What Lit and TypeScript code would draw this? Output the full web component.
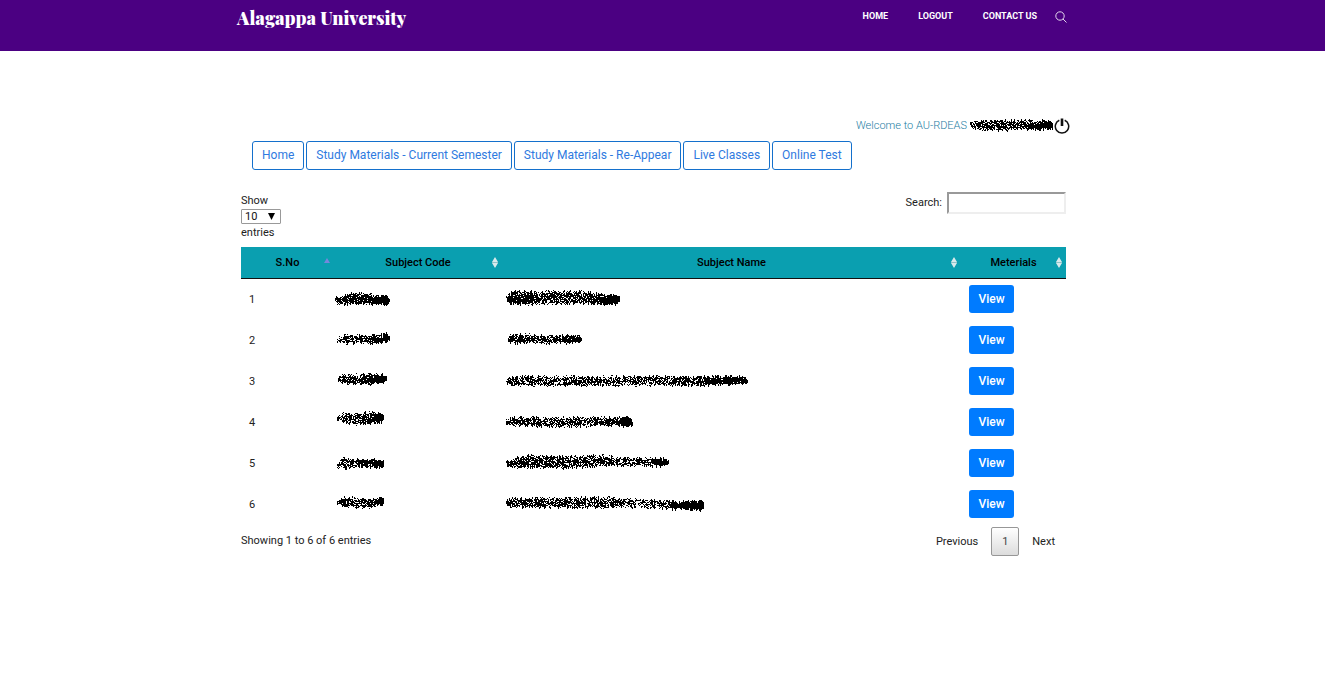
import { LitElement, html, css, svg } from "lit";
import { customElement, property } from "lit/decorators.js";

// x, top, bottom and ink density of a marker stroke at that x
type Knot = [number, number, number, number];

/** A black marker scribble that hides private text. */
@customElement("marker-scribble")
class MarkerScribble extends LitElement {
  @property({ attribute: false }) knots: Knot[] = [];
  @property({ type: Number }) seed = 1;

  static styles = css`
    :host { display: block; }
    svg { display: block; overflow: visible; }
  `;

  private ink(): string {
    let state = this.seed * 7919 + 17;
    const next = () => {
      state = (state * 1103515245 + 12345) % 2147483648;
      return state / 2147483648;
    };
    let d = "";
    for (let i = 0; i < this.knots.length - 1; i++) {
      const a = this.knots[i];
      const b = this.knots[i + 1];
      for (let x = a[0]; x < b[0]; x++) {
        const t = (x - a[0]) / (b[0] - a[0]);
        const mix = (k: number) => a[k] + (b[k] - a[k]) * t;
        const top = Math.round(mix(1) + (next() * 3 - 2));
        const bottom = Math.round(mix(2) - (next() * 3 - 1));
        for (let y = top; y < bottom; y++) {
          const middle = 1 - Math.abs((y - top) / (bottom - top) - 0.5) * 0.4;
          if (next() < mix(3) * middle + 0.14) d += `M${x} ${y}h1v1h-1z`;
        }
      }
    }
    return d;
  }

  render() {
    const width = this.knots.length ? this.knots[this.knots.length - 1][0] + 1 : 0;
    return html`<svg width=${width} height="28" aria-hidden="true" shape-rendering="crispEdges">
      ${svg`<path d=${this.ink()} fill="#000"></path>`}
    </svg>`;
  }
}

interface Row {
  code: Knot[];
  name: Knot[];
}

const rows: Row[] = [
  {
    code: [[1, 14, 17, 0.8], [4, 12, 20, 0.8], [18, 8, 20, 0.8], [33, 9, 20, 0.8], [40, 11, 20, 0.9], [53, 12, 20, 1], [56, 14, 18, 1]],
    name: [[4, 12, 16, 0.7], [9, 7, 20, 0.9], [18, 7, 20, 0.8], [40, 7, 20, 0.6], [85, 7, 19, 0.65], [100, 10, 20, 0.9], [114, 11, 20, 1], [118, 13, 18, 1]],
  },
  {
    code: [[3, 13, 16, 0.7], [7, 10, 18, 0.65], [30, 10, 18, 0.6], [42, 10, 18, 0.8], [52, 8, 17, 1], [56, 11, 15, 1]],
    name: [[6, 12, 16, 0.8], [9, 9, 18, 0.8], [22, 9, 18, 0.65], [48, 10, 18, 0.65], [62, 10, 18, 0.8], [76, 9, 18, 0.95], [80, 12, 16, 1]],
  },
  {
    code: [[3, 12, 14, 0.7], [8, 8, 17, 0.7], [22, 8, 18, 0.6], [34, 7, 18, 0.8], [49, 8, 17, 0.95], [53, 11, 15, 1]],
    name: [[4, 13, 17, 0.8], [9, 10, 19, 0.65], [60, 10, 19, 0.6], [120, 10, 19, 0.55], [180, 10, 19, 0.65], [210, 10, 19, 0.8], [240, 10, 18, 0.9], [246, 13, 16, 1]],
  },
  {
    code: [[3, 9, 12, 0.7], [8, 6, 14, 0.7], [20, 6, 17, 0.6], [36, 5, 16, 0.75], [47, 6, 15, 1], [50, 8, 13, 1]],
    name: [[4, 13, 17, 0.7], [10, 10, 18, 0.7], [45, 10, 19, 0.6], [90, 10, 19, 0.65], [112, 10, 18, 0.8], [127, 10, 19, 0.95], [131, 13, 17, 1]],
  },
  {
    code: [[3, 15, 20, 0.7], [9, 10, 20, 0.6], [22, 11, 19, 0.75], [36, 11, 19, 0.8], [47, 11, 19, 1], [50, 13, 17, 1]],
    name: [[4, 13, 17, 0.7], [10, 10, 20, 0.7], [25, 7, 19, 0.75], [60, 8, 20, 0.65], [100, 7, 18, 0.65], [130, 10, 17, 0.55], [150, 10, 18, 0.7], [163, 10, 18, 1], [167, 13, 16, 1]],
  },
  {
    code: [[3, 11, 15, 0.8], [8, 8, 17, 0.8], [20, 8, 18, 0.6], [36, 9, 18, 0.7], [47, 8, 16, 1], [50, 10, 15, 1]],
    name: [[4, 11, 15, 0.8], [10, 9, 18, 0.7], [60, 8, 18, 0.6], [110, 8, 18, 0.6], [135, 10, 18, 0.5], [160, 11, 19, 0.6], [175, 12, 20, 0.9], [198, 11, 21, 1], [202, 13, 18, 1]],
  },
];

const welcomeInk: Knot[] = [[1, 10, 15, 0.8], [6, 9, 18, 0.7], [30, 9, 19, 0.65], [50, 9, 18, 0.7], [65, 9, 18, 0.85], [80, 9, 18, 0.95], [84, 12, 17, 1]];

const tabs = [
  "Home",
  "Study Materials - Current Semester",
  "Study Materials - Re-Appear",
  "Live Classes",
  "Online Test",
];

const columns = ["S.No", "Subject Code", "Subject Name", "Meterials"];

@customElement("app-root")
class AppRoot extends LitElement {
  static styles = css`
    :host {
      display: block;
      min-height: 100vh;
      background: #fff;
      color: #222;
      font: 11px/16px Roboto, sans-serif;
    }
    * { box-sizing: border-box; }
    header { background: #4b0082; padding-right: 18px; }
    .bar {
      display: flex;
      justify-content: space-between;
      align-items: flex-start;
      max-width: 833px;
      height: 51px;
      margin: 0 auto;
      padding: 6px 3px 0 0;
    }
    .brand {
      margin: 0;
      color: #fff;
      font: 900 18px/24px "Playfair Display", "Liberation Serif", serif;
    }
    .links { display: flex; align-items: center; gap: 30px; height: 20px; }
    .links a { color: #fff; font-size: 9px; font-weight: 700; text-decoration: none; }
    .icon-button { display: flex; padding: 0; border: 0; background: none; cursor: pointer; }
    .find { margin-left: -12px; padding-top: 2px; }
    main { padding: 65px 18px 0 0; }
    .content { max-width: 825px; margin: 0 auto; }
    .welcome {
      display: flex;
      justify-content: flex-end;
      align-items: center;
      height: 20px;
      margin-right: -4px;
      color: #1b7da3;
      font-weight: 300;
    }
    .welcome span { margin-right: 2px; }
    .tabs { display: flex; flex-wrap: wrap; gap: 2px; padding: 5px 11px 22px; }
    .tab {
      padding: 0 9px;
      border: 1px solid #1470cc;
      border-radius: 3px;
      color: #2f7ae0;
      font-size: 12px;
      line-height: 27px;
      text-decoration: none;
      white-space: nowrap;
    }
    .tools { display: flex; justify-content: space-between; align-items: flex-start; padding-bottom: 6px; }
    .length { display: flex; flex-direction: column; padding-top: 1px; }
    .pick { display: grid; width: 40px; height: 16px; align-items: start; }
    .pick select, .pick svg { grid-area: 1 / 1; }
    .pick select {
      width: 40px;
      height: 15px;
      padding: 0 3px;
      appearance: none;
      border: 1px solid #999;
      border-radius: 1px;
      background: #fff;
      color: #111;
      font: 11px/13px Roboto, sans-serif;
    }
    .pick svg { justify-self: end; margin: 4px 6px 0 0; pointer-events: none; }
    .search { display: flex; align-items: center; gap: 5px; }
    .search input {
      width: 119px;
      height: 22px;
      padding: 1px 4px;
      border: 2px solid;
      border-color: #999 #eee #eee #999;
      font: 11px/16px Roboto, sans-serif;
    }
    table { width: 100%; table-layout: fixed; border-collapse: separate; border-spacing: 0; }
    .c0 { width: 93px; }
    .c1 { width: 168px; }
    .c3 { width: 105px; }
    th {
      height: 32px;
      padding: 0;
      border-bottom: 1px solid #111;
      background: #0a9fb0;
      color: #000;
      font-weight: 500;
    }
    .head { display: grid; grid-template-columns: 12px 1fr 12px; align-items: center; }
    .head span { grid-column: 2; }
    td { padding: 6px 0 7px; vertical-align: middle; }
    .number, .action { padding-left: 8px; }
    .number { padding-top: 8px; }
    .view {
      display: block;
      width: 45px;
      height: 28px;
      padding: 0;
      border: 0;
      border-radius: 3px;
      background: #007bff;
      color: #fff;
      font: 500 12px/28px Roboto, sans-serif;
      cursor: pointer;
    }
    .footer { display: flex; justify-content: space-between; padding-top: 2px; }
    .info { padding-top: 6px; }
    .pages { display: flex; gap: 2px; }
    .pages button {
      height: 29px;
      padding: 0 10px;
      border: 1px solid transparent;
      border-radius: 2px;
      background: none;
      color: #222;
      font: 11px/27px Roboto, sans-serif;
    }
    .pages .current { width: 28px; border-color: #979797; background: linear-gradient(#fff, #dcdcdc); color: #444; }
  `;

  private sortMark(index: number) {
    return index === 0
      ? html`<svg width="10" height="16" viewBox="0 0 10 16" aria-hidden="true"><path d="M2 8L5 3L8 8z" fill="#7388dc"></path></svg>`
      : html`<svg width="10" height="16" viewBox="0 0 10 16" aria-hidden="true"><path d="M2 7L5 2L8 7zM2 8L5 13L8 8z" fill="#d8eaec"></path><path d="M2 7.5H8" stroke="#8fc3c9"></path></svg>`;
  }

  render() {
    return html`
      <header>
        <div class="bar">
          <h1 class="brand">Alagappa University</h1>
          <nav class="links">
            <a href="#">HOME</a>
            <a href="#">LOGOUT</a>
            <a href="#">CONTACT US</a>
            <button class="icon-button find" aria-label="Find">
              <svg width="12" height="12" viewBox="0 0 12 12" fill="none" stroke="#e2d5ec">
                <circle cx="5" cy="5" r="4.2"></circle>
                <path d="M8 8L11.5 11.5"></path>
              </svg>
            </button>
          </nav>
        </div>
      </header>
      <main>
        <div class="content">
          <div class="welcome">
            <span>Welcome to AU-RDEAS</span>
            <marker-scribble .knots=${welcomeInk} seed="31"></marker-scribble>
            <button class="icon-button" aria-label="Log out">
              <svg width="16" height="16" viewBox="0 0 16 16" fill="none" stroke="#111">
                <path d="M5.3 2.2A6.7 6.7 0 1 0 10.7 2.2" stroke-width="1.5"></path>
                <path d="M8 0.5V8" stroke-width="2.6"></path>
              </svg>
            </button>
          </div>
          <nav class="tabs">${tabs.map((t) => html`<a class="tab" href="#">${t}</a>`)}</nav>
          <div class="tools">
            <div class="length">
              <label for="length">Show</label>
              <div class="pick">
                <select id="length"><option>10</option><option>25</option><option>50</option></select>
                <svg width="7" height="7" viewBox="0 0 7 7" aria-hidden="true"><path d="M0 0H7L3.5 7z" fill="#000"></path></svg>
              </div>
              <span>entries</span>
            </div>
            <div class="search">
              <label for="search">Search:</label>
              <input id="search" type="search" />
            </div>
          </div>
          <table>
            <thead>
              <tr>
                ${columns.map(
                  (c, i) => html`<th class="c${i}" scope="col"><div class="head"><span>${c}</span>${this.sortMark(i)}</div></th>`
                )}
              </tr>
            </thead>
            <tbody>
              ${rows.map(
                (r, i) => html`<tr>
                  <td class="number">${i + 1}</td>
                  <td><marker-scribble .knots=${r.code} .seed=${i + 2}></marker-scribble></td>
                  <td><marker-scribble .knots=${r.name} .seed=${i + 12}></marker-scribble></td>
                  <td class="action"><button class="view">View</button></td>
                </tr>`
              )}
            </tbody>
          </table>
          <div class="footer">
            <span class="info">Showing 1 to 6 of 6 entries</span>
            <div class="pages">
              <button>Previous</button>
              <button class="current">1</button>
              <button>Next</button>
            </div>
          </div>
        </div>
      </main>
    `;
  }
}
